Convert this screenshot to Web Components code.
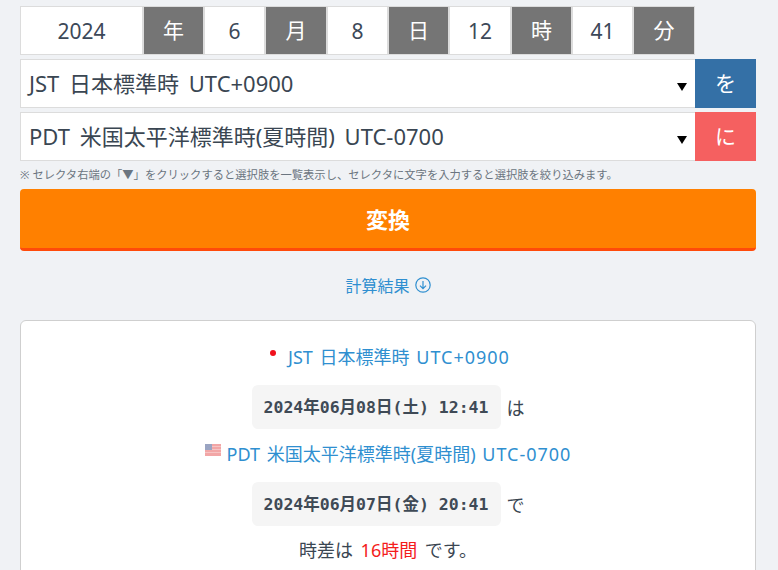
<!DOCTYPE html>
<html lang="ja">
<head>
<meta charset="utf-8">
<title>時差計算</title>
<style>
  html, body { margin: 0; height: 570px; overflow: hidden; background: #f0f2f5; }
  body { font-family: "Noto Sans", "Noto Sans CJK JP", sans-serif; color: #3a4652; }
</style>
</head>
<body>
<tz-app></tz-app>

<script>
class DateField extends HTMLElement {
    constructor() {
        super();
        this.attachShadow({ mode: "open" }).innerHTML = `
        <style>
            :host {
                display: flex;
                align-items: center;
                justify-content: center;
                box-sizing: border-box;
                height: 49px;
                background: #fff;
                border: 1px solid #dcdcdc;
                font-size: 21px;
                color: #3c4858;
            }
            :host([label]) {
                background: #757575;
                color: #fff;
                border-color: #dcdcdc;
                padding-bottom: 3px;
            }
        </style>
        <slot></slot>`;
    }
}

class TzSelect extends HTMLElement {
    constructor() {
        super();
        this.attachShadow({ mode: "open" }).innerHTML = `
        <style>
            :host {
                display: flex;
                height: 49px;
            }
            .box {
                flex: 1;
                display: flex;
                align-items: center;
                justify-content: space-between;
                box-sizing: border-box;
                padding: 0 8px 4px 8px;
                background: #fff;
                border: 1px solid #dcdcdc;
                border-right: 0;
                font-size: 22px;
                word-spacing: 4px;
                color: #3a4652;
            }
            .arrow {
                width: 0;
                height: 0;
                margin-top: 11px;
                border-left: 5.5px solid transparent;
                border-right: 5.5px solid transparent;
                border-top: 8px solid #000;
            }
            .tag {
                width: 61px;
                display: flex;
                align-items: center;
                justify-content: center;
                padding-bottom: 3px;
                box-sizing: border-box;
                color: #fff;
                font-size: 21px;
                background: var(--tag-color);
            }
        </style>
        <div class="box"><span><slot></slot></span><span class="arrow"></span></div>
        <div class="tag"><slot name="tag"></slot></div>`;
    }
}

class ConvertButton extends HTMLElement {
    constructor() {
        super();
        this.attachShadow({ mode: "open" }).innerHTML = `
        <style>
            :host {
                display: flex;
                align-items: center;
                justify-content: center;
                box-sizing: border-box;
                height: 62px;
                padding-bottom: 2px;
                background: #ff8000;
                border-bottom: 3px solid #ff4a0a;
                border-radius: 4px;
                color: #fff;
                font-size: 22px;
                font-weight: 700;
            }
        </style>
        <slot></slot>`;
    }
}

class ResultCard extends HTMLElement {
    constructor() {
        super();
        this.attachShadow({ mode: "open" }).innerHTML = `
        <style>
            :host {
                display: flex;
                flex-direction: column;
                align-items: center;
                box-sizing: border-box;
                height: 300px;
                padding-top: 21px;
                background: #fff;
                border: 1px solid #cfcfcf;
                border-radius: 6px;
                font-size: 18px;
                word-spacing: 3px;
            }
        </style>
        <slot></slot>`;
    }
}

class ZoneLine extends HTMLElement {
    constructor() {
        super();
        this.attachShadow({ mode: "open" }).innerHTML = `
        <style>
            :host {
                display: flex;
                align-items: center;
                justify-content: center;
                height: 28px;
                color: #2f8fd0;
                font-size: 18px;
                word-spacing: 2px;
            }
            .mark {
                display: flex;
                margin: -6px 6px 0 0;
            }
        </style>
        <span class="mark"><slot name="mark"></slot></span>
        <span><slot></slot></span>`;
    }
}

class TimeLine extends HTMLElement {
    constructor() {
        super();
        this.attachShadow({ mode: "open" }).innerHTML = `
        <style>
            :host {
                display: flex;
                align-items: center;
                justify-content: center;
                gap: 6px;
                margin: 15px 0 10px;
                color: #3a4652;
                font-size: 18px;
            }
            code {
                display: block;
                box-sizing: border-box;
                width: 249px;
                height: 44px;
                line-height: 45px;
                text-align: center;
                background: #f5f5f5;
                border-radius: 6px;
                font-family: "DejaVu Sans Mono", "Noto Sans CJK JP", monospace;
                font-size: 16.5px;
                font-weight: 700;
                word-spacing: 0;
                color: #3f4a56;
            }
        </style>
        <code><slot></slot></code><span><slot name="suffix"></slot></span>`;
    }
}

class TzApp extends HTMLElement {
    constructor() {
        super();
        this.attachShadow({ mode: "open" }).innerHTML = `
        <style>
            :host {
                display: block;
                box-sizing: border-box;
                height: 570px;
                overflow: hidden;
                padding: 6px 22px 0 20px;
            }
            .dates {
                display: grid;
                grid-template-columns: 123px 61px 61px 62px 61px 61px 62px 61px 61px 62px;
                width: 675px;
            }
            .selects {
                display: flex;
                flex-direction: column;
                gap: 4px;
                margin-top: 4px;
            }
            .note {
                margin: 5px 0 6px;
                height: 17px;
                line-height: 17px;
                font-size: 11.3px;
                color: #6b7580;
            }
            .down {
                display: flex;
                align-items: center;
                justify-content: center;
                gap: 5px;
                height: 28px;
                margin: 20px 0 21px;
                color: #2f8fd0;
                font-size: 16px;
            }
            .dot {
                width: 6px;
                height: 6px;
                border-radius: 50%;
                background: #f0101c;
                margin: 0 6px 0 4px;
            }
            .utc {
                letter-spacing: 1px;
            }
            .diff b {
                font-weight: 400;
                color: #f41c1c;
            }
        </style>
        <div class="dates">
            <date-field>2024</date-field><date-field label>年</date-field>
            <date-field>6</date-field><date-field label>月</date-field>
            <date-field>8</date-field><date-field label>日</date-field>
            <date-field>12</date-field><date-field label>時</date-field>
            <date-field>41</date-field><date-field label>分</date-field>
        </div>
        <div class="selects">
            <tz-select style="--tag-color:#3470a6">JST 日本標準時 UTC+0900<span slot="tag">を</span></tz-select>
            <tz-select style="--tag-color:#f56060">PDT 米国太平洋標準時(夏時間) UTC-0700<span slot="tag">に</span></tz-select>
        </div>
        <div class="note">※ セレクタ右端の「▼」をクリックすると選択肢を一覧表示し、セレクタに文字を入力すると選択肢を絞り込みます。</div>
        <convert-button>変換</convert-button>
        <div class="down">
            <span>計算結果</span>
            <svg width="16" height="16" viewBox="0 0 16 16" fill="none" stroke="#2f8fd0" stroke-width="1.2">
                <circle cx="8" cy="8" r="7.2"/>
                <path d="M8 4v7.5M5 8.6l3 3 3-3"/>
            </svg>
        </div>
        <result-card>
            <zone-line><span slot="mark" class="dot"></span>JST 日本標準時 <span class="utc">UTC+0900</span></zone-line>
            <time-line>2024年06月08日(土) 12:41<span slot="suffix">は</span></time-line>
            <zone-line>
                <svg slot="mark" width="16" height="12" viewBox="0 0 16 12">
                    <rect width="16" height="12" fill="#f2a6a6"/>
                    <path d="M0 2.5h16M0 5.5h16M0 8.5h16" stroke="#f6c4c4" stroke-width="1"/>
                    <rect width="7" height="6" fill="#9aa4c2"/>
                </svg>
                PDT 米国太平洋標準時(夏時間) <span class="utc">UTC-0700</span>
            </zone-line>
            <time-line>2024年06月07日(金) 20:41<span slot="suffix">で</span></time-line>
            <div class="diff">時差は <b>16時間</b> です。</div>
        </result-card>`;
    }
}

customElements.define("date-field", DateField);
customElements.define("tz-select", TzSelect);
customElements.define("convert-button", ConvertButton);
customElements.define("result-card", ResultCard);
customElements.define("zone-line", ZoneLine);
customElements.define("time-line", TimeLine);
customElements.define("tz-app", TzApp);
</script>
</body>
</html>
